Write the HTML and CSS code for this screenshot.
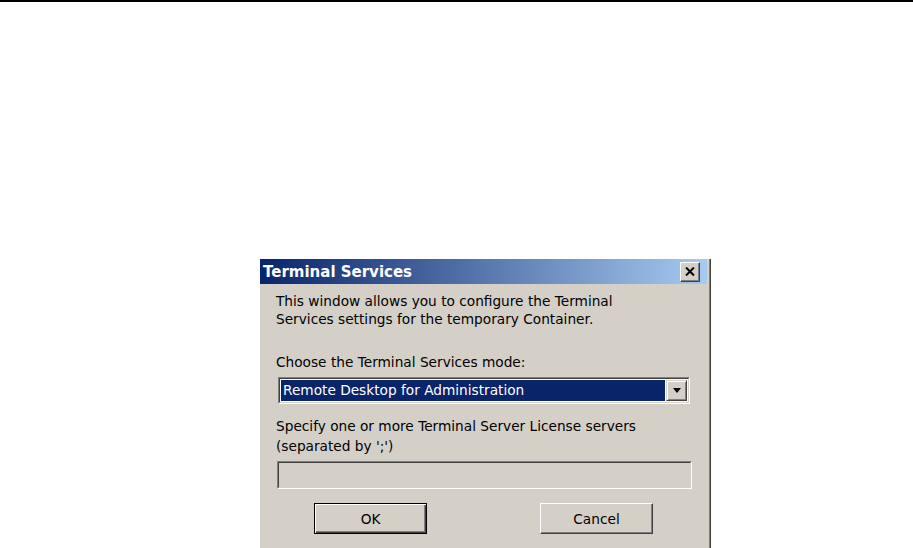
FILE: index.html
```html
<!DOCTYPE html>
<html lang="en">
<head>
    <meta charset="UTF-8">
    <title>Terminal Services</title>
    <link rel="stylesheet" href="styles.css">
</head>
<body>
    <div class="topline"></div>
    <div class="dialog">
        <div class="titlebar">
            <span class="title">Terminal Services</span>
            <span class="close">
                <svg width="10" height="9" viewBox="0 0 10 9">
                    <path d="M1 0.5 L9 8.5 M9 0.5 L1 8.5" stroke="#000" stroke-width="2" fill="none"/>
                </svg>
            </span>
        </div>
        <div class="content">
            <p class="intro">This window allows you to configure the Terminal<br>Services settings for the temporary Container.</p>
            <p class="label">Choose the Terminal Services mode:</p>
            <div class="combo">
                <div class="combo-in">
                    <div class="combo-value">Remote Desktop for Administration</div>
                    <div class="combo-btn">
                        <svg width="8" height="5" viewBox="0 0 8 5"><polygon points="0,0 8,0 4,5" fill="#000"/></svg>
                    </div>
                </div>
            </div>
            <p class="label two">Specify one or more Terminal Server License servers<br>(separated by ';')</p>
            <div class="field"><div class="field-in"></div></div>
            <div class="buttons">
                <button class="btn default">OK</button>
                <button class="btn">Cancel</button>
            </div>
        </div>
    </div>
</body>
</html>
```

FILE: styles.css
```css
body{
    margin: 0;
    background-color: #fff;
    font-family: "DejaVu Sans", "Liberation Sans", sans-serif;
    font-size: 13.7px;
    color: #000;
}
.topline{
    height: 2px;
    background-color: #000;
}
.dialog{
    width: 447px;
    height: 289px;
    margin: 257px 0 0 260px;
    padding-right: 3px;
    background-color: #d4d0c8;
    border-right: 1px solid #404040;
    box-shadow: inset -1px 0 #808080;
}
.titlebar{
    height: 25px;
    display: flex;
    align-items: center;
    justify-content: space-between;
    padding: 0 7px 0 3px;
    background: linear-gradient(to right, #0a246a, #a6caf0);
}
.title{
    color: #fff;
    font-weight: bold;
    font-size: 15px;
}
.close{
    width: 20px;
    height: 20px;
    box-sizing: border-box;
    display: flex;
    align-items: center;
    justify-content: center;
    background-color: #d4d0c8;
    border: 1px solid;
    border-color: #fff #404040 #404040 #fff;
    box-shadow: inset -1px -1px #808080;
}
.content{
    padding-left: 16px;
}
p{
    margin: 0;
}
.intro{
    margin-top: 8px;
    line-height: 18px;
}
.label{
    margin-top: 25px;
    line-height: 18px;
}
.label.two{
    margin-top: 12px;
    line-height: 20px;
}
.combo{
    width: 412px;
    height: 27px;
    margin: 6px 0 0 2px;
    box-sizing: border-box;
    border: 1px solid;
    border-color: #808080 #fff #fff #808080;
}
.combo-in{
    height: 100%;
    box-sizing: border-box;
    display: flex;
    padding: 1px;
    background-color: #fff;
    border: 1px solid;
    border-color: #404040 #d4d0c8 #d4d0c8 #404040;
}
.combo-value{
    flex: 1;
    margin-right: 1px;
    padding-left: 2px;
    line-height: 21px;
    background-color: #0a246a;
    color: #fff;
}
.combo-btn{
    width: 21px;
    box-sizing: border-box;
    display: flex;
    align-items: center;
    justify-content: center;
    background-color: #d4d0c8;
    border: 1px solid;
    border-color: #d4d0c8 #404040 #404040 #d4d0c8;
    box-shadow: inset 1px 1px #fff, inset -1px -1px #808080;
}
.field{
    width: 415px;
    height: 28px;
    margin: 5px 0 0 1px;
    box-sizing: border-box;
    border: 1px solid;
    border-color: #808080 #fff #fff #808080;
}
.field-in{
    height: 100%;
    box-sizing: border-box;
    border: 1px solid;
    border-color: #404040 #d4d0c8 #d4d0c8 #404040;
}
.buttons{
    display: flex;
    gap: 113px;
    margin-top: 14px;
    padding-left: 38px;
}
.btn{
    width: 113px;
    height: 31px;
    box-sizing: border-box;
    padding: 0;
    font-family: inherit;
    font-size: 13.7px;
    color: #000;
    background-color: #d4d0c8;
    border: 1px solid;
    border-color: #fff #404040 #404040 #fff;
    box-shadow: inset -1px -1px #808080;
}
.btn.default{
    border-color: #000;
    box-shadow: inset 1px 1px #fff, inset -1px -1px #404040, inset -2px -2px #808080;
}
```
